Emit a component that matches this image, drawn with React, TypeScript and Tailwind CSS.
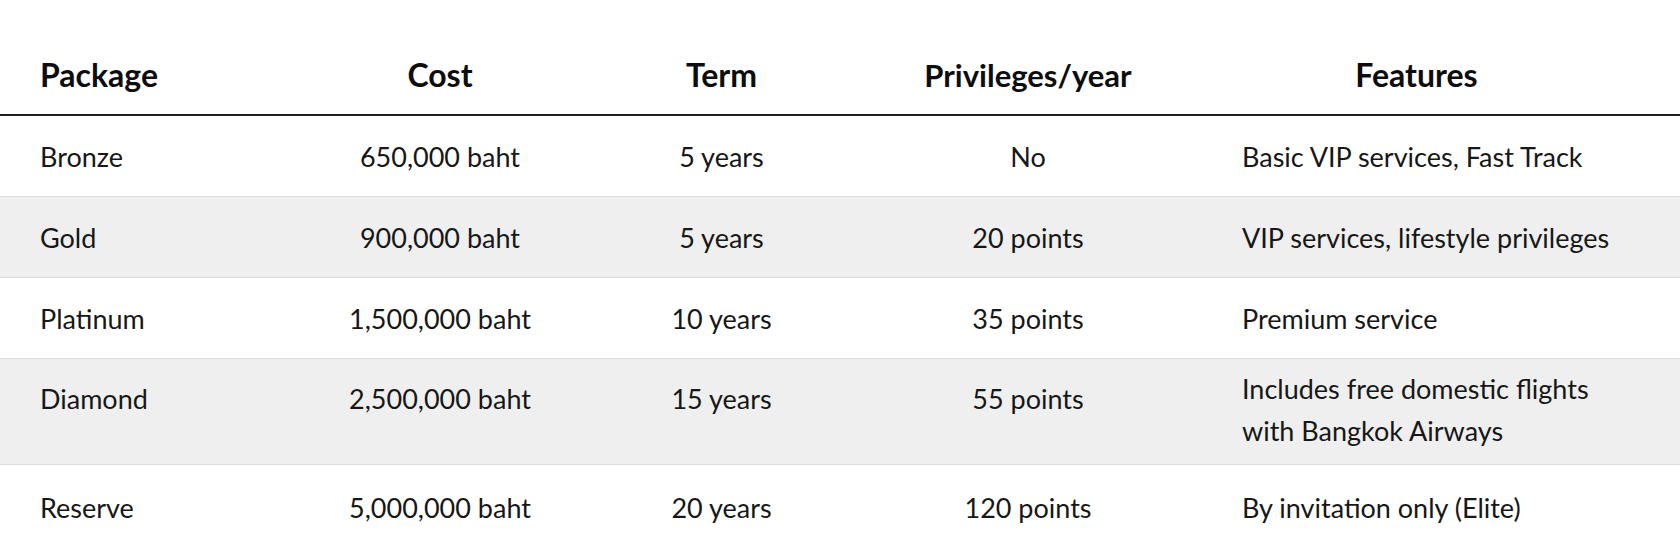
import React from "react";

interface PackageRow {
  name: string;
  cost: string;
  term: string;
  privileges: string;
  features: string[];
}

const rows: PackageRow[] = [
  { name: "Bronze", cost: "650,000 baht", term: "5 years", privileges: "No", features: ["Basic VIP services, Fast Track"] },
  { name: "Gold", cost: "900,000 baht", term: "5 years", privileges: "20 points", features: ["VIP services, lifestyle privileges"] },
  { name: "Platinum", cost: "1,500,000 baht", term: "10 years", privileges: "35 points", features: ["Premium service"] },
  {
    name: "Diamond",
    cost: "2,500,000 baht",
    term: "15 years",
    privileges: "55 points",
    features: ["Includes free domestic flights", "with Bangkok Airways"],
  },
  { name: "Reserve", cost: "5,000,000 baht", term: "20 years", privileges: "120 points", features: ["By invitation only (Elite)"] },
];

const App: React.FC = () => {
  return (
    <div className="w-[1680px] h-[560px] overflow-hidden bg-white text-[#171717] font-['Lato',sans-serif]">
      <table className="w-full table-fixed border-collapse">
        <colgroup>
          <col className="w-[280px]" />
          <col className="w-[320px]" />
          <col className="w-[243px]" />
          <col className="w-[370px]" />
          <col className="w-[467px]" />
        </colgroup>
        <thead>
          <tr className="border-b-2 border-[#1e1e1e]">
            <th className="h-[115px] pt-[36px] pl-[40px] text-left align-middle text-[32px] leading-[38px] font-bold text-[#0d0d0d]">
              Package
            </th>
            <th className="h-[115px] pt-[36px] text-center align-middle text-[32px] leading-[38px] font-bold text-[#0d0d0d]">
              Cost
            </th>
            <th className="h-[115px] pt-[36px] text-center align-middle text-[32px] leading-[38px] font-bold text-[#0d0d0d]">
              Term
            </th>
            <th className="h-[115px] pt-[36px] text-center align-middle text-[31px] leading-[38px] font-bold text-[#0d0d0d]">
              Privileges/year
            </th>
            <th className="h-[115px] pt-[36px] pr-[60px] text-center align-middle text-[32px] leading-[38px] font-bold text-[#0d0d0d]">
              Features
            </th>
          </tr>
        </thead>
        <tbody>
          {rows.map((row, i) => {
            const tall = row.features.length > 1;
            const last = i === rows.length - 1;
            // the short cells of the two-line row sit a little above the middle
            const shift = tall ? "pb-[25px]" : "pt-[3px]";
            return (
              <tr
                key={row.name}
                className={`${i % 2 === 1 ? "bg-[#efefef]" : "bg-white"} ${last ? "" : "border-b border-[#dcdcdc]"}`}
              >
                <td className={`${tall ? "h-[106px]" : last ? "h-[84px]" : "h-[81px]"} ${shift} pl-[40px] align-middle text-[27px] leading-[32px]`}>
                  {row.name}
                </td>
                <td className={`${shift} text-center align-middle text-[27px] leading-[32px]`}>{row.cost}</td>
                <td className={`${shift} text-center align-middle text-[27px] leading-[32px]`}>{row.term}</td>
                <td className={`${shift} text-center align-middle text-[27px] leading-[32px]`}>{row.privileges}</td>
                <td className={`pl-[29px] ${tall ? "pb-[2px]" : "pt-[3px]"} align-middle text-[27px] leading-[42px]`}>
                  {row.features.map((line) => (
                    <div key={line}>{line}</div>
                  ))}
                </td>
              </tr>
            );
          })}
        </tbody>
      </table>
    </div>
  );
};

export default App;
